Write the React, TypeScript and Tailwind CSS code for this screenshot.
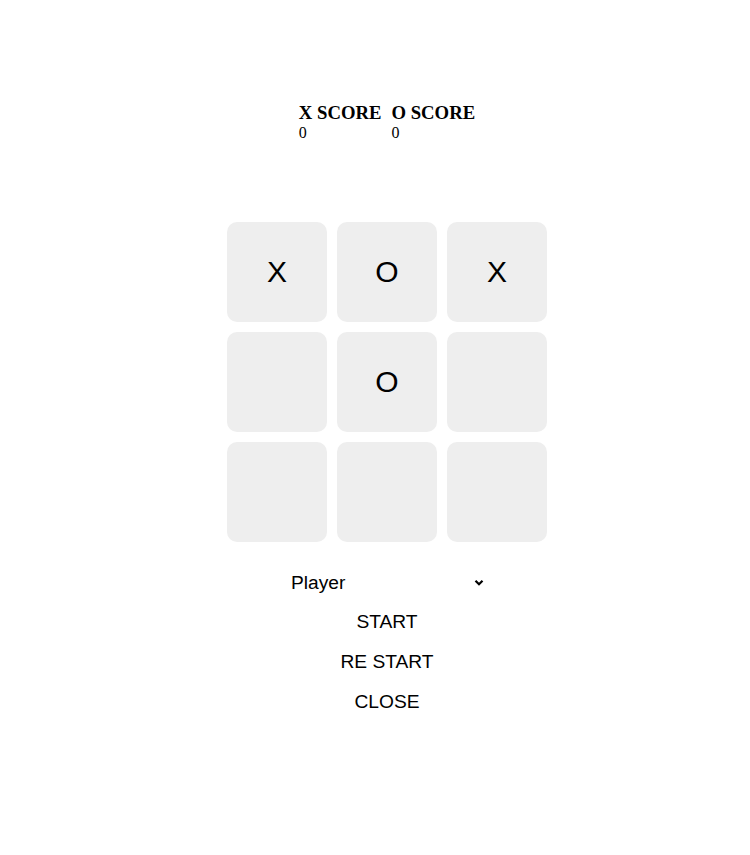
import { useState } from "react";

const initial: string[] = ["X", "O", "X", "", "O", "", "", "", ""];

export default function App() {
  const [cells] = useState<string[]>(initial);
  const [mode, setMode] = useState("player");

  return (
    <div className="min-h-[855px] w-full bg-white pl-[24px] font-['Liberation_Sans',Arial,sans-serif] text-black">
      <div className="flex flex-col items-center pt-[102px]">
        {/* Scores */}
        <div className="flex gap-[10px] font-['Liberation_Serif','Times_New_Roman',serif]">
          <div className="flex flex-col">
            <h3 className="text-[18.72px] font-bold leading-[21px]">X SCORE</h3>
            <span className="mt-[1px] text-[16px] leading-[18px]">0</span>
          </div>
          <div className="flex flex-col">
            <h3 className="text-[18.72px] font-bold leading-[21px]">O SCORE</h3>
            <span className="mt-[1px] text-[16px] leading-[18px]">0</span>
          </div>
        </div>

        {/* Board */}
        <div className="mt-[80px] grid grid-cols-[repeat(3,100px)] gap-[10px]">
          {cells.map((c, i) => (
            <button
              key={i}
              className="flex h-[100px] w-[100px] items-center justify-center rounded-[10px] bg-[#eeeeee] text-[30px] leading-none"
            >
              {c}
            </button>
          ))}
        </div>

        {/* Controls */}
        <div className="mt-[29px] flex flex-col items-center">
          <div className="relative w-[200px]">
            <select
              value={mode}
              onChange={(e) => setMode(e.target.value)}
              className="h-[24px] w-full appearance-none bg-transparent px-[4px] text-[19.2px] leading-[24px] outline-none"
            >
              <option value="player">Player</option>
              <option value="computer">Computer</option>
            </select>
            <svg viewBox="0 0 10 8" className="pointer-events-none absolute right-[3px] top-[8px] h-[8px] w-[10px]">
              <path d="M1.5 1.8l3.5 3.5 3.5-3.5" fill="none" stroke="currentColor" strokeWidth="2.2" />
            </svg>
          </div>
          <button className="mt-[14px] h-[24px] text-[19.2px] leading-[24px]">START</button>
          <button className="mt-[16px] h-[24px] text-[19.2px] leading-[24px]">RE START</button>
          <button className="mt-[16px] h-[24px] text-[19.2px] leading-[24px]">CLOSE</button>
        </div>
      </div>
    </div>
  );
}
